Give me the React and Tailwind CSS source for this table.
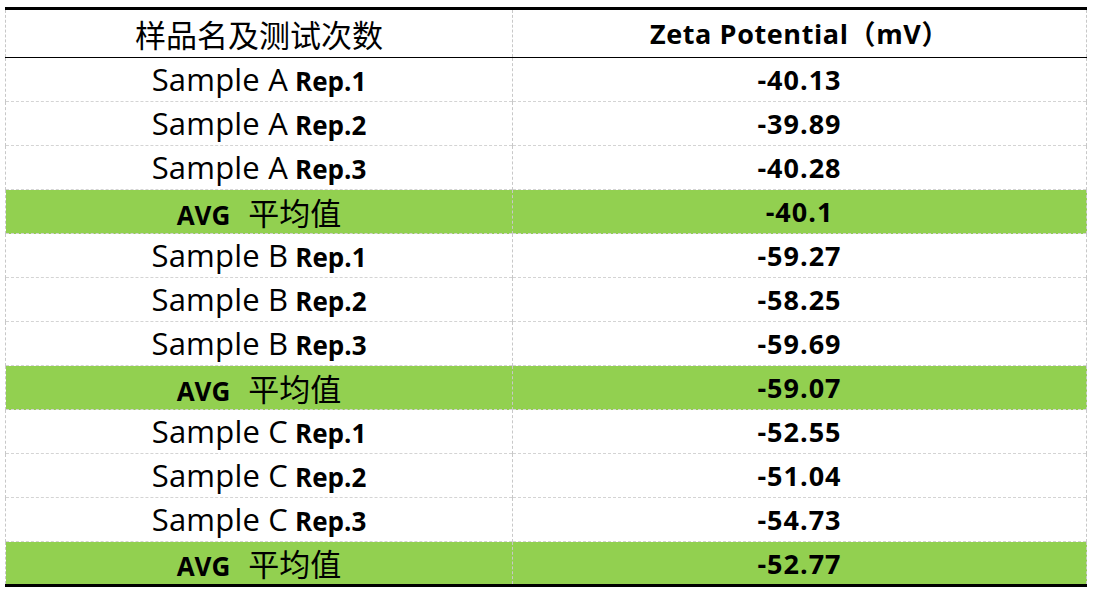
const rows = [
  { s: 'A', r: 1, v: '-40.13' },
  { s: 'A', r: 2, v: '-39.89' },
  { s: 'A', r: 3, v: '-40.28' },
  { avg: true, v: '-40.1' },
  { s: 'B', r: 1, v: '-59.27' },
  { s: 'B', r: 2, v: '-58.25' },
  { s: 'B', r: 3, v: '-59.69' },
  { avg: true, v: '-59.07' },
  { s: 'C', r: 1, v: '-52.55' },
  { s: 'C', r: 2, v: '-51.04' },
  { s: 'C', r: 3, v: '-54.73' },
  { avg: true, v: '-52.77' },
]

const latin = { fontFamily: '"Open Sans", "Noto Sans CJK SC", sans-serif' }
const cjk = { fontFamily: '"Noto Sans CJK SC", sans-serif' }

export default function App() {
  return (
    <div className="w-[1095px] h-[596px] bg-white pt-[7px] pl-[5px]" style={latin}>
      <table className="w-[1082px] border-collapse text-black">
        <thead>
          <tr className="h-[49px] border-t-[3px] border-t-black border-b border-b-black">
            <th className="w-[507px] border-l border-dashed border-l-[#c8c8c8] text-[31px] font-normal text-center leading-none" style={cjk}>
              样品名及测试次数
            </th>
            <th className="border-l border-r border-dashed border-[#c8c8c8] text-[27px] font-bold text-center leading-none tracking-[0.6px]">
              Zeta Potential（mV）
            </th>
          </tr>
        </thead>
        <tbody>
          {rows.map((row, i) => {
            const last = i === rows.length - 1
            return (
              <tr
                key={i}
                className={
                  'h-[44px] ' +
                  (row.avg ? 'bg-[#92d050] ' : '') +
                  (last ? 'border-b-[3px] border-b-black' : 'border-b border-dashed border-b-[#d4d4d4]')
                }
              >
                <td className="border-l border-dashed border-l-[#c8c8c8] text-center leading-none">
                  {row.avg ? (
                    <span>
                      <span className="text-[26px] font-bold">AVG</span>
                      <span className="text-[31px] ml-[18px]" style={cjk}>平均值</span>
                    </span>
                  ) : (
                    <span>
                      <span className="text-[31px] tracking-[0.2px]">Sample {row.s}</span>
                      <span className="text-[26px] font-bold ml-[7px]">Rep.{row.r}</span>
                    </span>
                  )}
                </td>
                <td className="border-l border-r border-dashed border-l-[#c8c8c8] border-r-[#c8c8c8] text-center text-[27px] font-bold leading-none tracking-[1px]">
                  {row.v}
                </td>
              </tr>
            )
          })}
        </tbody>
      </table>
    </div>
  )
}
